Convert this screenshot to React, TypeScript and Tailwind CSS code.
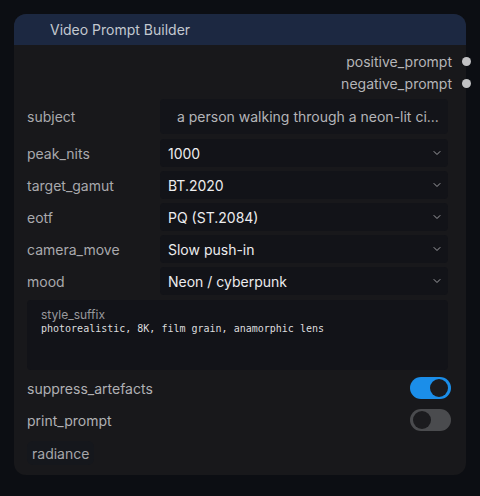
import { ChevronDown } from 'lucide-react';

const selects: Array<{ label: string; value: string }> = [
  { label: 'peak_nits', value: '1000' },
  { label: 'target_gamut', value: 'BT.2020' },
  { label: 'eotf', value: 'PQ (ST.2084)' },
  { label: 'camera_move', value: 'Slow push-in' },
  { label: 'mood', value: 'Neon / cyberpunk' },
];

function Toggle({ on }: { on: boolean }) {
  return (
    <div
      className={`flex h-[22px] w-[41px] items-center rounded-full px-[3px] ${
        on ? 'justify-end bg-[#1b8ee9]' : 'justify-start bg-[#4a4b4e]'
      }`}
    >
      <div className="h-[18px] w-[18px] rounded-full bg-[#1b1b1e]" />
    </div>
  );
}

export default function App() {
  return (
    <div
      className="min-h-[496px] w-[480px] bg-[#0c0e13] pt-[14px] pl-[14px]"
      style={{ fontFamily: 'Inter, "Noto Sans", sans-serif' }}
    >
      <div className="w-[452px] overflow-visible rounded-[12px] bg-[#18181b] pb-[10px]">
        <div className="flex h-[31px] items-center rounded-t-[12px] bg-[#1c2841] pl-[36px] text-[14px] text-[#c3c8d0]">
          Video Prompt Builder
        </div>

        <div className="flex flex-col items-end pt-[5px]">
          {['positive_prompt', 'negative_prompt'].map((o) => (
            <div key={o} className="flex h-[22px] items-center text-[14px] text-[#b5b5b8]">
              <span>{o}</span>
              <span className="ml-[10px] mr-[-5px] h-[9px] w-[9px] rounded-full bg-[#c2c2c4]" />
            </div>
          ))}
        </div>

        <div className="flex flex-col pl-[13px] pr-[18px] pt-[5px] text-[14px]">
          <div className="flex h-[35px] items-center">
            <div className="w-[133px] text-[#a9a9ad]">subject</div>
            <div className="flex h-[35px] flex-1 items-center rounded-[4px] bg-[#131419] pl-[17px] text-[#b4b4b8]">
              a person walking through a neon-lit ci...
            </div>
          </div>

          <div className="mt-[5px] flex flex-col gap-[4px]">
            {selects.map((s) => (
              <div key={s.label} className="flex h-[28px] items-center">
                <div className="w-[133px] text-[#a9a9ad]">{s.label}</div>
                <div className="flex h-[28px] flex-1 items-center justify-between rounded-[4px] bg-[#121318] pl-[8px] pr-[5px] text-[#ececee]">
                  <span>{s.value}</span>
                  <ChevronDown size={12} strokeWidth={2} className="text-[#a0a0a4]" />
                </div>
              </div>
            ))}
          </div>

          <div className="mt-[5px] h-[70px] rounded-[4px] bg-[#121318] px-[14px] pt-[8px]">
            <div className="text-[12px] leading-[14px] text-[#98989c]">style_suffix</div>
            <div
              className="text-[10px] leading-[14px] text-[#dcdcde]"
              style={{ fontFamily: '"DejaVu Sans Mono", monospace' }}
            >
              photorealistic, 8K, film grain, anamorphic lens
            </div>
          </div>

          <div className="mr-[-3px] mt-[7px] flex h-[22px] items-center justify-between">
            <span className="text-[#b0b0b4]">suppress_artefacts</span>
            <Toggle on />
          </div>
          <div className="mr-[-3px] mt-[10px] flex h-[22px] items-center justify-between">
            <span className="text-[#b0b0b4]">print_prompt</span>
            <Toggle on={false} />
          </div>

          <div className="mt-[10px] flex">
            <div className="flex h-[24px] items-center rounded-[6px] bg-[#15171c] px-[5px] text-[#a6a6aa]">
              radiance
            </div>
          </div>
        </div>
      </div>
    </div>
  );
}
